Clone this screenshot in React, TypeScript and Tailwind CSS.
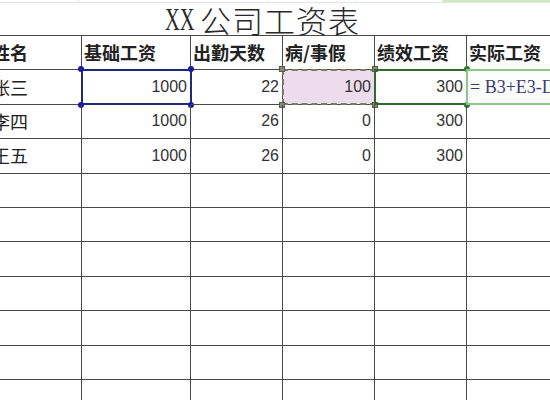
import React from 'react';

const cjk = '"Noto Sans CJK SC", "Liberation Sans", sans-serif';

interface Row {
  name: string;
  base: string;
  days: string;
  leave: string;
  perf: string;
}

const rows: Row[] = [
  { name: '张三', base: '1000', days: '22', leave: '100', perf: '300' },
  { name: '李四', base: '1000', days: '26', leave: '0', perf: '300' },
  { name: '王五', base: '1000', days: '26', leave: '0', perf: '300' },
];

const headers = ['姓名', '基础工资', '出勤天数', '病/事假', '绩效工资', '实际工资'];

const cell = 'relative h-[34.4px] border-r-[1.5px] border-b-[1.5px] border-[#4a4a4a] flex items-center';
const num = 'justify-end pr-[3px] text-[16px] text-[#333] font-["Liberation_Sans",sans-serif]';

const Dot: React.FC<{ className: string }> = ({ className }) => (
  <span className={`absolute w-[6px] h-[6px] rounded-full ${className}`} />
);

const Square: React.FC<{ className: string }> = ({ className }) => (
  <span className={`absolute w-[6px] h-[6px] bg-[#8a8a7a] border border-[#5a5a4a] ${className}`} />
);

const App: React.FC = () => {
  const empty = Array.from({ length: 7 });

  return (
    <div className="w-[550px] h-[400px] overflow-hidden bg-white" style={{ fontFamily: cjk }}>
      {/* row above the title, mostly scrolled out */}
      <div className="h-[3px] flex border-b border-[#e4e4e4]">
        <div className="w-[79px] border-r border-[#e8e8e8]" />
        <div className="w-[102px] border-r border-[#e8e8e8]" />
        <div className="w-[87px] border-r border-[#e8e8e8]" />
        <div className="w-[88px] border-r border-[#e8e8e8]" />
        <div className="w-[87px] border-r border-[#e8e8e8]" />
        <div className="flex-1 bg-[#cfe8c4]" />
      </div>

      {/* title */}
      <div className="h-[32px] flex items-end pl-[165px] text-[#2a2a2a] leading-none">
        <span className="inline-block w-[35px] text-[31px] font-['Liberation_Serif',serif] scale-x-[0.66] origin-left">XX</span>
        <span className="text-[31px] tracking-[1px] font-light">公司工资表</span>
      </div>

      <div className="ml-[-10px] w-[570px] grid grid-cols-[92px_109px_92px_92px_92px_93px] border-t-[1.5px] border-[#4a4a4a]">
        {headers.map(h => (
          <div key={h} className={`${cell} pl-[2px] text-[18px] font-bold text-[#222]`}>
            {h}
          </div>
        ))}

        {rows.map((r, i) => (
          <React.Fragment key={r.name}>
            <div className={`${cell} pl-[2px] text-[18px] text-[#222]`}>{r.name}</div>
            <div className={`${cell} ${num}`}>
              {i === 0 && (
                <>
                  <div className="absolute -left-[1.5px] -top-[1.5px] -right-[1.5px] -bottom-[1.5px] border-2 border-[#1f2a78]" />
                  <Dot className="bg-[#1a1aa8] -left-[4px] -top-[4px]" />
                  <Dot className="bg-[#1a1aa8] -right-[4px] -top-[4px]" />
                  <Dot className="bg-[#1a1aa8] -left-[4px] -bottom-[4px]" />
                  <Dot className="bg-[#1a1aa8] -right-[4px] -bottom-[4px]" />
                </>
              )}
              <span className="relative">{r.base}</span>
            </div>
            <div className={`${cell} ${num}`}>{r.days}</div>
            <div className={`${cell} ${num} ${i === 0 ? 'bg-[#ecdcee] text-[#4a3a5c]' : ''}`}>
              {i === 0 && (
                <>
                  <div className="absolute -left-[1.5px] -top-[1.5px] -right-[1.5px] -bottom-[1.5px] border-2 border-dashed border-[#75805e]" />
                  <Square className="-left-[4px] -top-[4px]" />
                  <Square className="-right-[4px] -top-[4px]" />
                  <Square className="-left-[4px] -bottom-[4px]" />
                  <Square className="-right-[4px] -bottom-[4px]" />
                </>
              )}
              <span className="relative">{r.leave}</span>
            </div>
            <div className={`${cell} ${num}`}>
              {i === 0 && (
                <>
                  <div className="absolute -left-[1.5px] -top-[1.5px] -right-[1.5px] -bottom-[1.5px] border-2 border-[#2f6a2f]" />
                  <Dot className="bg-[#2e7d2e] -right-[4px] -top-[4px]" />
                  <Dot className="bg-[#2e7d2e] -right-[4px] -bottom-[4px]" />
                </>
              )}
              <span className="relative">{r.perf}</span>
            </div>
            <div className={`${cell} pl-[3px]`}>
              {i === 0 && (
                <>
                  <div className="absolute -left-[1px] -top-[1.5px] -right-[1.5px] -bottom-[1.5px] border-2 border-[#8cc88c] bg-[#fbfdfb]" />
                  <span className="relative whitespace-nowrap text-[18px] text-[#3c3c74] font-['Liberation_Serif',serif]">
                    = B3+E3-D3
                  </span>
                </>
              )}
            </div>
          </React.Fragment>
        ))}

        {empty.map((_, i) => (
          <React.Fragment key={i}>
            {headers.map(h => (
              <div key={h} className={cell} />
            ))}
          </React.Fragment>
        ))}
      </div>
    </div>
  );
};

export default App;
